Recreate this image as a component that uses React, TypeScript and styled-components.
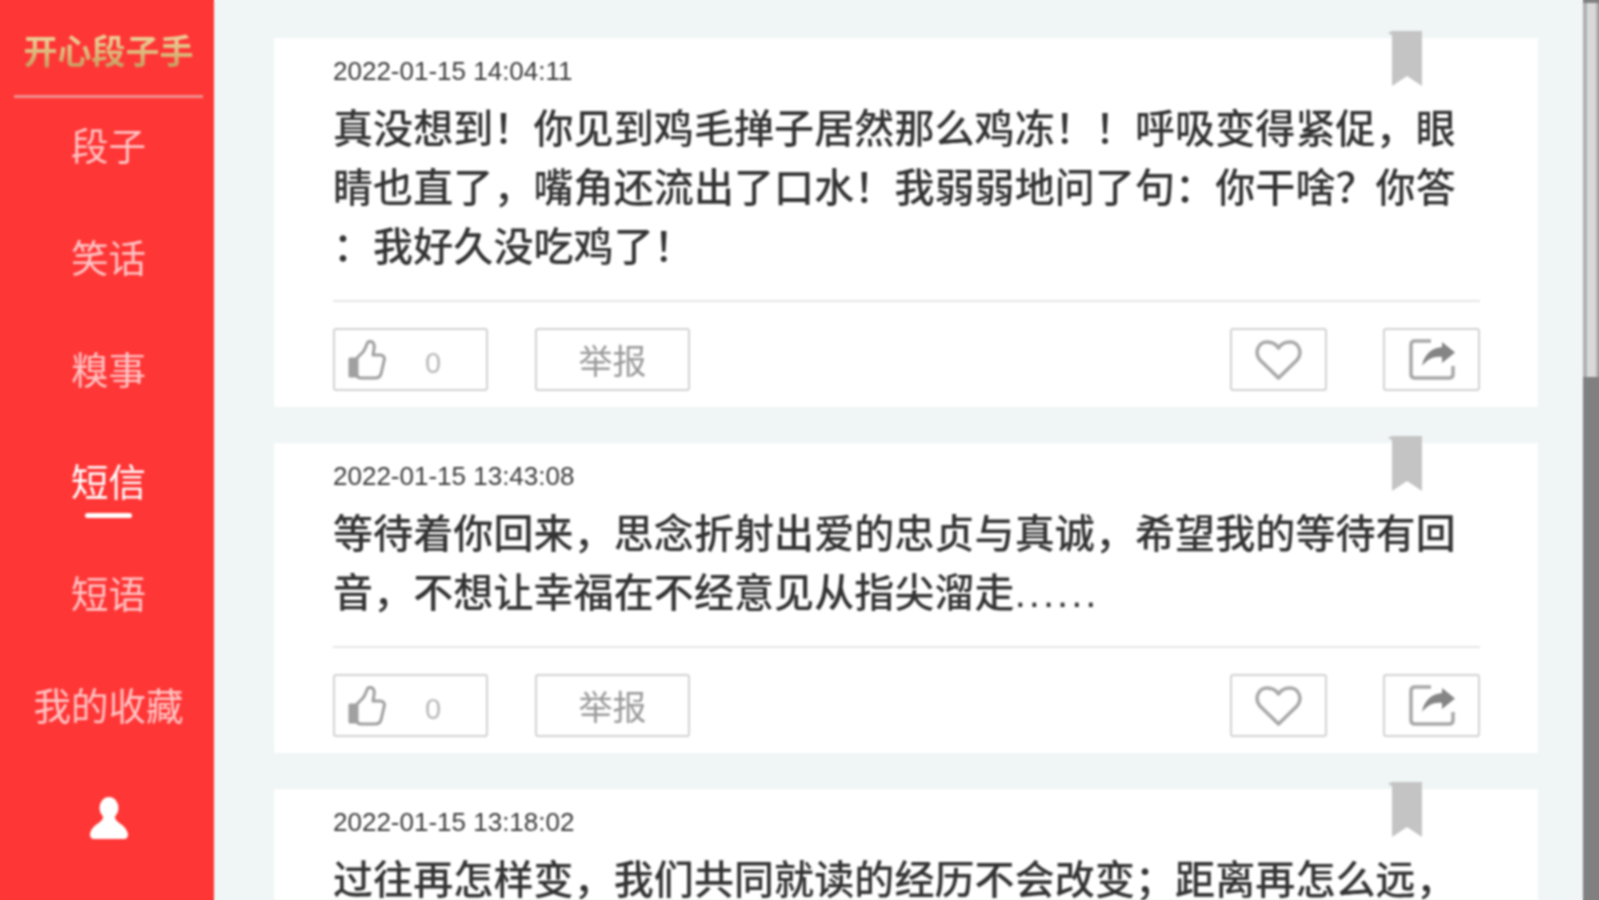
import React from 'react'
import styled, { createGlobalStyle } from 'styled-components'

const GlobalStyle = createGlobalStyle`
  html, body {
    margin: 0;
    height: 100%;
    overflow: hidden;
  }
  html {
    /* same colours as the columns, so the page blur does not fade at the window edge */
    background: linear-gradient(
      to right,
      #ff3636 214px,
      #f0f5f5 214px,
      #f0f5f5 1583px,
      #808080 1583px
    );
  }
  * {
    box-sizing: border-box;
  }
`

const Page = styled.div`
  display: flex;
  height: 900px;
  background: #f0f5f5;
  font-family: "Liberation Sans", "Noto Sans CJK SC", sans-serif;
  filter: blur(0.9px);
  overflow: hidden;
`

const Sidebar = styled.aside`
  flex: 0 0 214px;
  background: #ff3636;
  display: flex;
  flex-direction: column;
`

const Logo = styled.div`
  height: 98px;
  margin: 0 11px 0 14px;
  padding-top: 29px;
  border-bottom: 3px solid #f08f8f;
  text-align: center;
  font-size: 34px;
  line-height: 46px;
  font-weight: 700;
  color: transparent;
  background: linear-gradient(180deg, #f3d9a6 0%, #dcb679 55%, #b98c50 100%) no-repeat 0 29px / 100% 46px;
  -webkit-background-clip: text;
  background-clip: text;
`

const Nav = styled.nav`
  display: flex;
  flex-direction: column;
  gap: 16px;
  margin-top: -3px;
`

const NavItem = styled.a<{ $active?: boolean }>`
  position: relative;
  height: 96px;
  padding-left: 3px;
  display: flex;
  align-items: center;
  justify-content: center;
  font-size: 37.5px;
  color: ${(props) => (props.$active ? '#ffffff' : '#ffc4c4')};

  svg {
    margin-top: 6px;
  }

  ${(props) =>
    props.$active &&
    `&::after {
      content: '';
      position: absolute;
      left: 85px;
      bottom: 9px;
      width: 47px;
      height: 5px;
      border-radius: 3px;
      background: #ffffff;
    }`}
`

const Main = styled.main`
  flex: 1;
  padding: 38px 45px 0 60px;
  display: flex;
  flex-direction: column;
  gap: 36px;
  overflow: hidden;
`

const Card = styled.article`
  position: relative;
  flex: none;
  background: #ffffff;
  padding: 17px 58px 16px 59px;
`

const Bookmark = styled.svg`
  position: absolute;
  top: -7px;
  right: 116px;
  width: 34px;
  height: 55px;
  fill: #c4c4c4;
`

const DateLine = styled.div`
  font-size: 26px;
  line-height: 32px;
  color: #3a3a3a;
  margin-bottom: 13px;
`

const Body = styled.p`
  margin: 0;
  font-size: 40px;
  line-height: 59px;
  letter-spacing: 0.1px;
  font-weight: 500;
  color: #333333;
  line-break: anywhere;
`

const Dots = styled.span`
  letter-spacing: 3px;
`

const Actions = styled.div`
  margin-top: 23px;
  padding-top: 26px;
  border-top: 2px solid #e6e6e6;
  display: flex;
  justify-content: space-between;
`

const ActionGroup = styled.div<{ $gap: number }>`
  display: flex;
  gap: ${(props) => props.$gap}px;
`

const ActionButton = styled.button<{ $width: number }>`
  width: ${(props) => props.$width}px;
  height: 63px;
  padding: 0;
  display: flex;
  align-items: center;
  justify-content: center;
  background: #ffffff;
  border: 2px solid #d2d2d2;
  border-radius: 3px;
  font-family: inherit;
  font-size: 34px;
  color: #999999;
`

const LikeButton = styled(ActionButton)`
  justify-content: flex-start;
  padding-left: 13px;
`

const LikeCount = styled.span`
  margin: 8px 0 0 39px;
  font-size: 29px;
  color: #b8b8b8;
`

const Scrollbar = styled.div`
  flex: 0 0 16px;
  background: #808080;
  display: flex;
  flex-direction: column;
`

const ScrollThumb = styled.div`
  height: 374px;
  margin-top: 3px;
  background: #d9d9d9;
  border-left: 4px solid #b0b0b0;
  border-right: 3px solid #b0b0b0;
`

const ThumbIcon = () => (
  <svg width="38" height="40" viewBox="0 0 38 40" fill="none" stroke="#a0a0a0" strokeWidth="3" strokeLinejoin="round">
    <path d="M9 18 L15 12 C18 8 18 5 20 2 C25 0 27 4 26 9 L25 15 H32 C36 15 37 18 36 21 L33 34 C32 37 30 38 27 38 H13 C10 38 9 36 9 34 Z" />
    <path d="M2 19 H8 V36 H2 Z" fill="#a0a0a0" />
  </svg>
)

const HeartIcon = () => (
  <svg width="47" height="40" viewBox="0 0 47 40" fill="none" stroke="#a8a8a8" strokeWidth="3.5" strokeLinejoin="round">
    <path d="M23.5 38 L5 20 C-1 13 3 2 12 2 C17 2 21 4 23.5 8 C26 4 30 2 35 2 C44 2 48 13 42 20 Z" />
  </svg>
)

const ShareIcon = () => (
  <svg width="46" height="41" viewBox="0 0 46 41" fill="none">
    <path
      d="M22 2 H6 C3.500 2 2 3.500 2 6 V35 C2 37.500 3.500 39 6 39 H40 C42.500 39 44 37.500 44 35 V27"
      stroke="#a8a8a8"
      strokeWidth="3.500"
    />
    <path d="M33 3 L46 13.500 L33 24 V18 C25 17 19 20 13 27 C15 16 22 9 33 8 Z" fill="#858585" />
  </svg>
)

const UserIcon = () => (
  <svg width="38" height="42" viewBox="0 0 38 42" fill="#ffffff">
    <ellipse cx="19" cy="11" rx="9.500" ry="11" />
    <path d="M13 20 C13 26 2 27 0 37 C0 41 2 42 4 42 H34 C36 42 38 41 38 37 C36 27 25 26 25 20 Z" />
  </svg>
)

interface Post {
  date: string
  text: React.ReactNode
  // the last card runs off the bottom of the window, its buttons are never seen
  clipped?: boolean
}

const posts: Post[] = [
  {
    date: '2022-01-15 14:04:11',
    text: '真没想到！你见到鸡毛掸子居然那么鸡冻！！呼吸变得紧促，眼睛也直了，嘴角还流出了口水！我弱弱地问了句：你干啥？你答：我好久没吃鸡了！',
  },
  {
    date: '2022-01-15 13:43:08',
    text: (
      <>
        等待着你回来，思念折射出爱的忠贞与真诚，希望我的等待有回音，不想让幸福在不经意见从指尖溜走<Dots>......</Dots>
      </>
    ),
  },
  {
    date: '2022-01-15 13:18:02',
    text: '过往再怎样变，我们共同就读的经历不会改变；距离再怎么远，',
    clipped: true,
  },
]

const navItems = ['段子', '笑话', '糗事', '短信', '短语', '我的收藏']

const PostCard = ({ date, text, clipped }: Post) => (
  <Card>
    <Bookmark viewBox="0 0 34 55">
      <path d="M0 2 L4 0 H34 V55 L19 45 L4 55 V4 Z" />
    </Bookmark>
    <DateLine>{date}</DateLine>
    <Body>{text}</Body>
    {!clipped && (
      <Actions>
        <ActionGroup $gap={47}>
          <LikeButton $width={155}>
            <ThumbIcon />
            <LikeCount>0</LikeCount>
          </LikeButton>
          <ActionButton $width={155}>举报</ActionButton>
        </ActionGroup>
        <ActionGroup $gap={56}>
          <ActionButton $width={97}>
            <HeartIcon />
          </ActionButton>
          <ActionButton $width={97}>
            <ShareIcon />
          </ActionButton>
        </ActionGroup>
      </Actions>
    )}
  </Card>
)

const App = (): React.ReactElement => {
  return (
    <Page>
      <GlobalStyle />
      <Sidebar>
        <Logo>开心段子手</Logo>
        <Nav>
          {navItems.map((item) => (
            <NavItem key={item} $active={item === '短信'}>
              {item}
            </NavItem>
          ))}
          <NavItem>
            <UserIcon />
          </NavItem>
        </Nav>
      </Sidebar>
      <Main>
        {posts.map((post) => (
          <PostCard key={post.date} {...post} />
        ))}
      </Main>
      <Scrollbar>
        <ScrollThumb />
      </Scrollbar>
    </Page>
  )
}

export default App
